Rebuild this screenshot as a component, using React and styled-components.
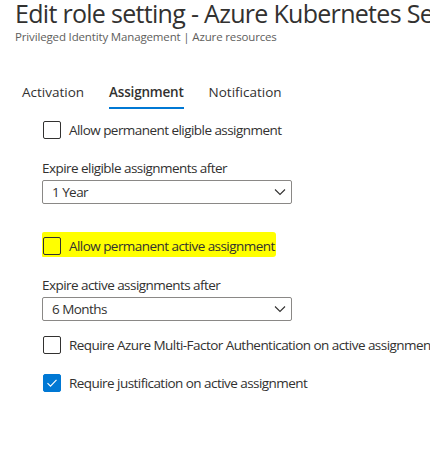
import React from "react";
import styled, { createGlobalStyle } from "styled-components";

const Global = createGlobalStyle`
  html, body { margin: 0; padding: 0; background: #fff; }
  body { font-family: "Open Sans", "Noto Sans", Arial, sans-serif; color: #323130; }
  * { box-sizing: border-box; }
`;

const Page = styled.div`
  width: 430px;
  height: 464px;
  overflow: hidden;
  position: relative;
`;

const Header = styled.header`
  padding: 0 0 0 15px;
  white-space: nowrap;
`;

const Title = styled.h1`
  margin: -1px 0 0 0;
  font-size: 25px;
  font-weight: 400;
  line-height: 28px;
  letter-spacing: -0.7px;
  color: #323130;
`;

const Subtitle = styled.div`
  font-size: 11.5px;
  line-height: 15px;
  letter-spacing: -0.15px;
  color: #605e5c;
  margin-top: 1.5px;
`;

const Tabs = styled.nav`
  display: flex;
  gap: 25px;
  margin: 38px 0 0 22px;
`;

const Tab = styled.div`
  font-size: 13.5px;
  line-height: 20px;
  padding-bottom: 5px;
  color: #323130;
  font-weight: ${(p) => (p.$active ? 600 : 400)};
  letter-spacing: ${(p) => (p.$active ? "-0.2px" : "0")};
  border-bottom: 2px solid ${(p) => (p.$active ? "#0078d4" : "transparent")};
`;

const Body = styled.div`
  padding: 12px 0 0 42px;
  display: flex;
  flex-direction: column;
  white-space: nowrap;
  font-size: 13.5px;
  letter-spacing: -0.55px;
`;

const CheckRow = styled.label`
  display: inline-flex;
  align-items: center;
  gap: 8px;
  align-self: flex-start;
  line-height: 18px;
  padding: ${(p) => (p.$highlight ? "5px 1px 2px 1px" : "0 0 0 1px")};
  margin: ${(p) => (p.$highlight ? "0 -1px -2px 0" : "0")};
  margin-top: ${(p) => (p.$mt || 0) - (p.$highlight ? 5 : 0)}px;
  background: ${(p) => (p.$highlight ? "#ffff00" : "transparent")};
  border-radius: ${(p) => (p.$highlight ? "2px 3px 3px 1px" : "0")};
`;

const Box = styled.span`
  width: 18px;
  height: 18px;
  flex: none;
  border: 1px solid ${(p) => (p.$checked ? "#0078d4" : "#323130")};
  border-radius: 2px;
  background: ${(p) => (p.$checked ? "#0078d4" : "transparent")};
  display: flex;
  align-items: center;
  justify-content: center;
`;

const FieldLabel = styled.div`
  line-height: 18px;
  margin-top: ${(p) => p.$mt || 0}px;
`;

const Select = styled.div`
  width: 250px;
  height: 24px;
  margin-top: 3px;
  border: 1px solid #8a8886;
  border-radius: 2px;
  display: flex;
  align-items: center;
  justify-content: space-between;
  padding: 0 5px 0 9px;
`;

const Check = () => (
  <svg width="12" height="10" viewBox="0 0 12 10">
    <path d="M1.5 5.2 L4.5 8.2 L10.5 1.8" fill="none" stroke="#fff" strokeWidth="1.1" />
  </svg>
);

const Chevron = () => (
  <svg width="12" height="8" viewBox="0 0 12 8">
    <path d="M1 1.5 L6 6.5 L11 1.5" fill="none" stroke="#323130" strokeWidth="1.1" />
  </svg>
);

export default function App() {
  return (
    <Page>
      <Global />
      <Header>
        <Title>Edit role setting - Azure Kubernetes Service</Title>
        <Subtitle>Privileged Identity Management | Azure resources</Subtitle>
      </Header>
      <Tabs>
        <Tab>Activation</Tab>
        <Tab $active>Assignment</Tab>
        <Tab>Notification</Tab>
      </Tabs>
      <Body>
        <CheckRow>
          <Box />
          Allow permanent eligible assignment
        </CheckRow>
        <FieldLabel $mt={20}>Expire eligible assignments after</FieldLabel>
        <Select>
          1 Year
          <Chevron />
        </Select>
        <CheckRow $highlight $mt={33}>
          <Box />
          Allow permanent active assignment
        </CheckRow>
        <FieldLabel $mt={21}>Expire active assignments after</FieldLabel>
        <Select>
          6 Months
          <Chevron />
        </Select>
        <CheckRow $mt={15}>
          <Box />
          Require Azure Multi-Factor Authentication on active assignment
        </CheckRow>
        <CheckRow $mt={20}>
          <Box $checked>
            <Check />
          </Box>
          Require justification on active assignment
        </CheckRow>
      </Body>
    </Page>
  );
}
